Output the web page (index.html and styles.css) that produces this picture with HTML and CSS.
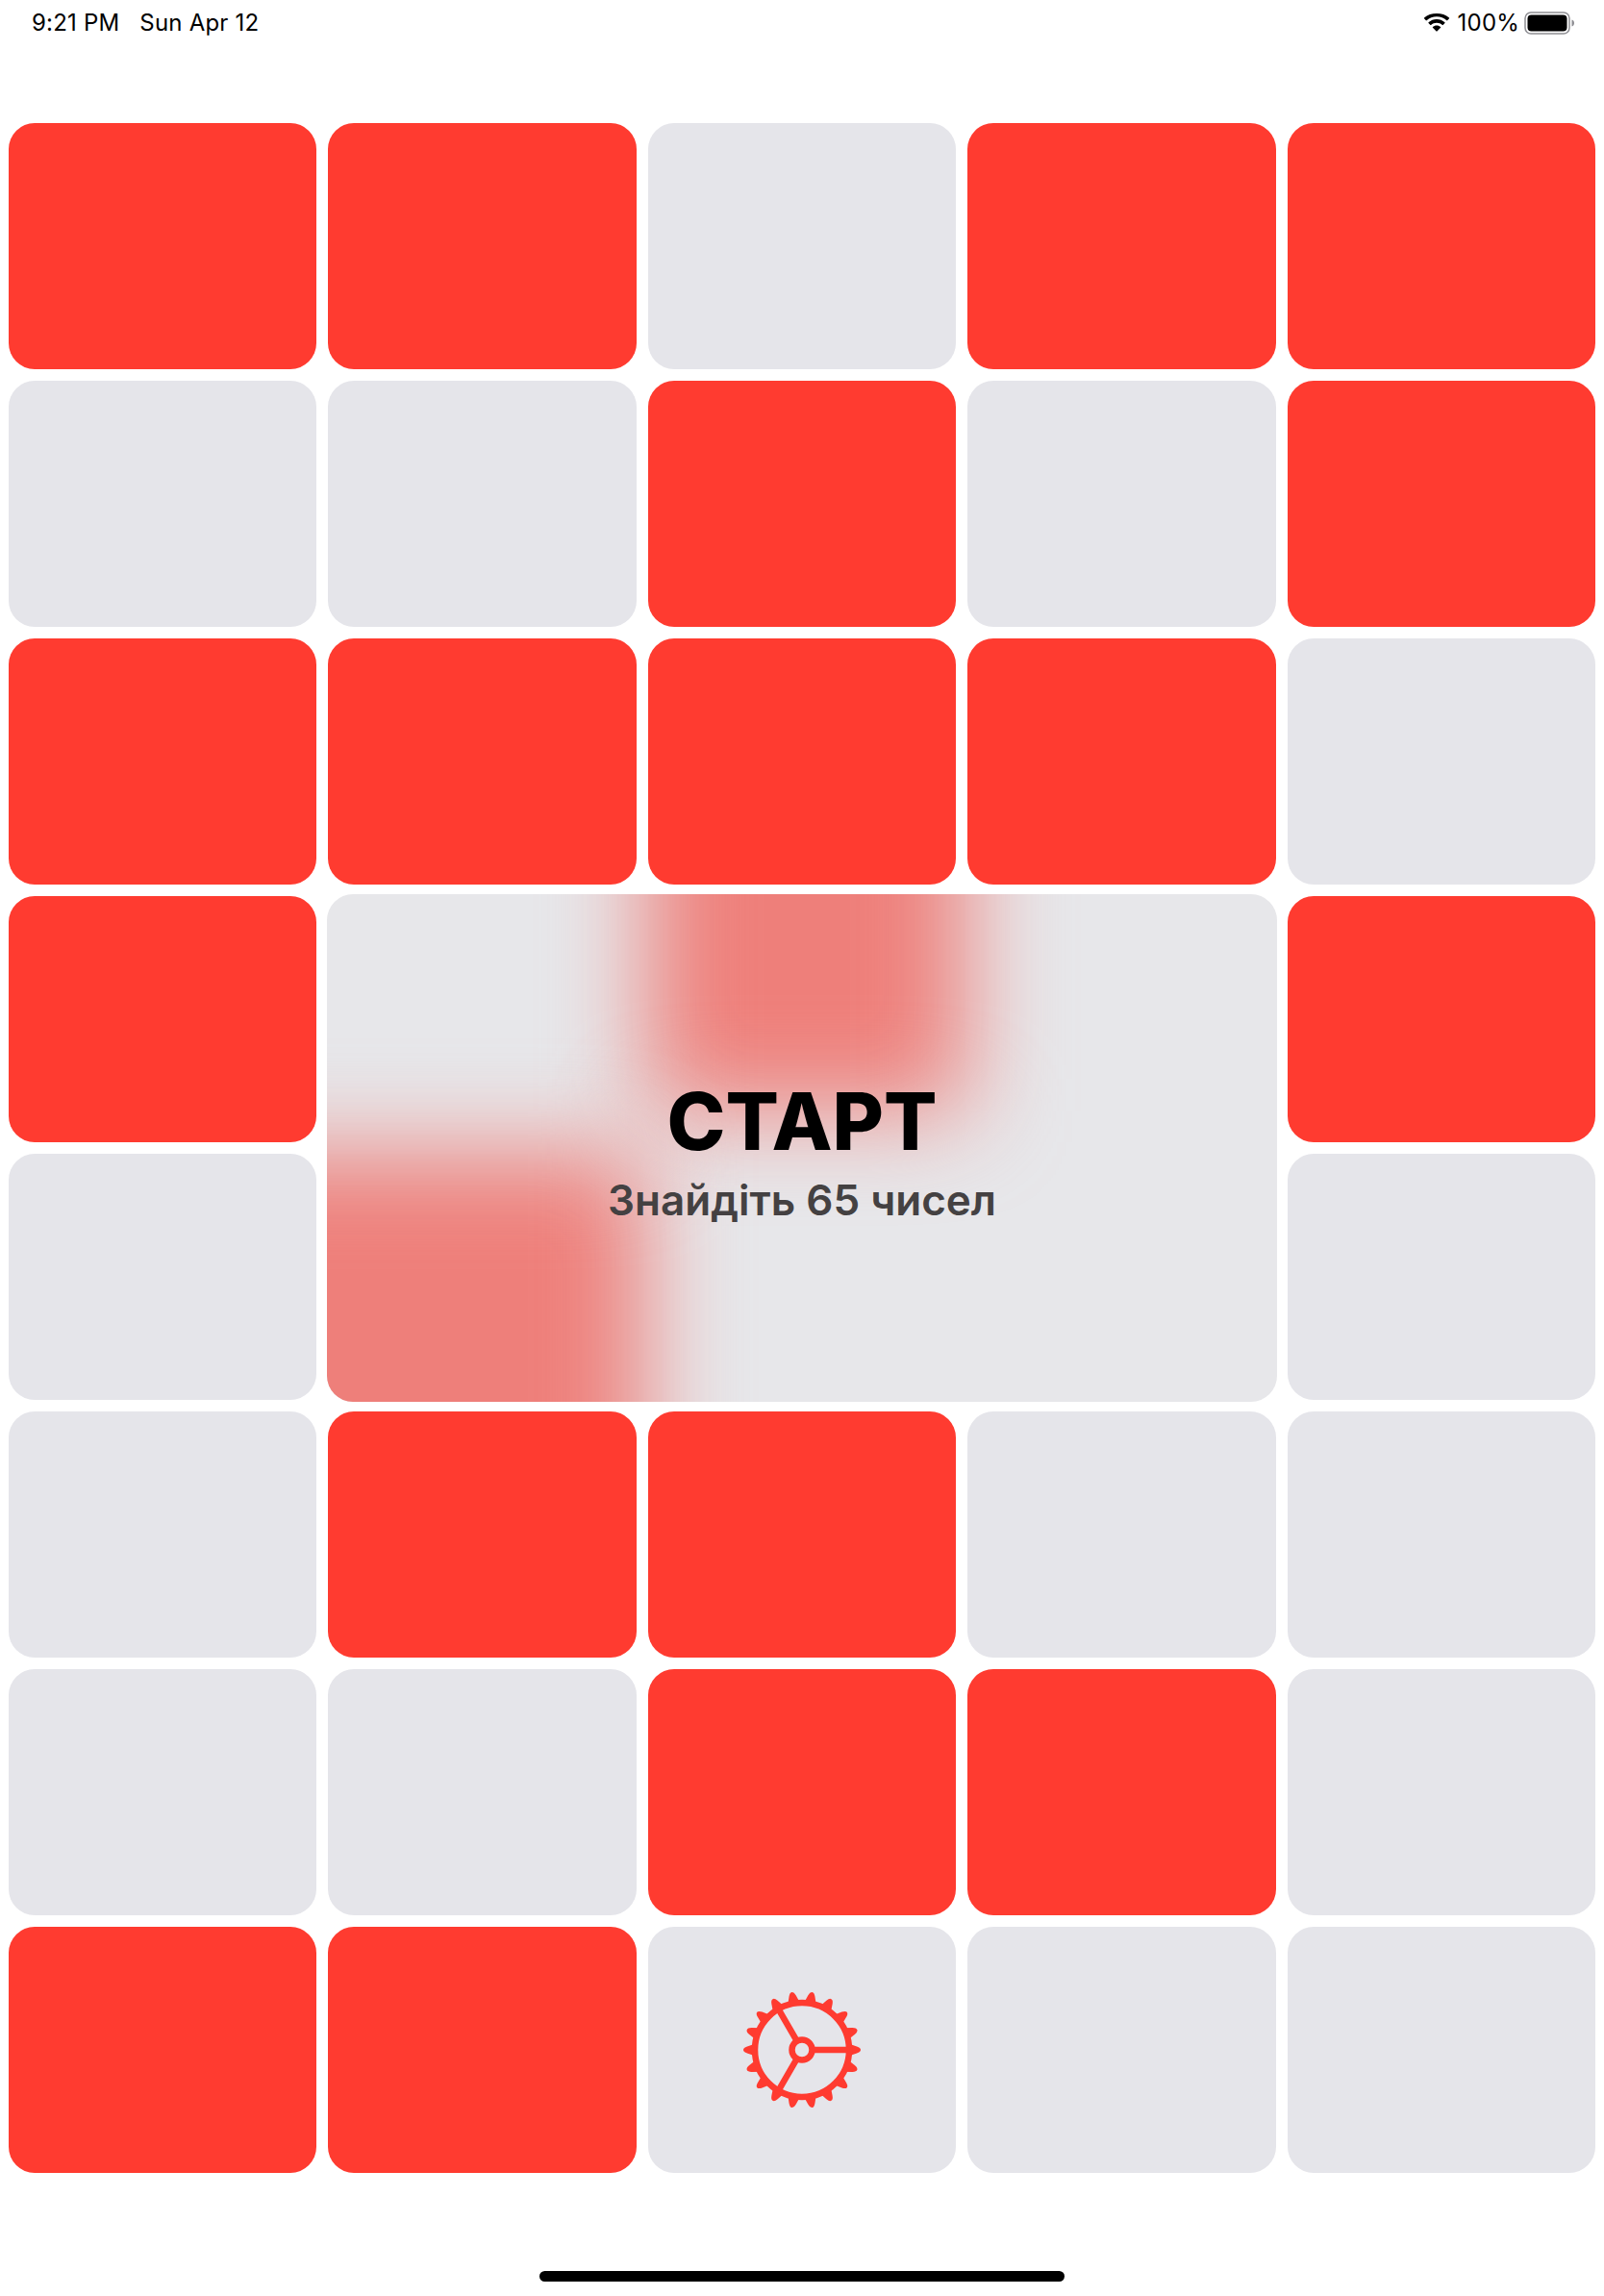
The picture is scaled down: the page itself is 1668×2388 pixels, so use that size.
FILE: index.html
```html
<!DOCTYPE html>
<html lang="en">
<head>
    <meta charset="UTF-8">
    <meta name="viewport" content="width=device-width, initial-scale=1.0">
    <title>Знайдіть 65 чисел</title>
    <link rel="stylesheet" href="styles.css">
</head>
<body>
    <div class="status-bar">
        <div class="status-left">
            <span>9:21 PM</span>
            <span>Sun Apr 12</span>
        </div>
        <div class="status-right">
            <svg class="wifi" width="28" height="20" viewBox="0 0 28 20">
                <path d="M14 3.200c4 0 7.600 1.500 10.400 4.100.2.2.5.2.7 0l1.900-2c.2-.2.2-.5 0-.7C23.600 1.400 19 0 14 0S4.400 1.400 1 4.600c-.2.2-.2.5 0 .7l1.900 2c.2.2.5.2.7 0C6.400 4.700 10 3.200 14 3.200z"/>
                <path d="M14 9.700c2.200 0 4.300.8 5.900 2.300.2.2.5.2.7 0l1.900-2c.2-.2.2-.5 0-.7C20.200 7.200 17.200 6 14 6s-6.200 1.200-8.500 3.300c-.2.2-.2.5 0 .7l1.900 2c.2.2.5.2.7 0 1.600-1.500 3.700-2.300 5.900-2.300z"/>
                <path d="M14 12.400c-1.600 0-3 .6-4.100 1.600-.2.2-.2.5 0 .7l3.700 3.900c.2.2.6.2.8 0l3.700-3.900c.2-.2.2-.5 0-.7-1.100-1-2.500-1.600-4.100-1.600z"/>
            </svg>
            <span>100%</span>
            <svg class="battery" width="53" height="24" viewBox="0 0 53 24">
                <rect x="1" y="1" width="46" height="22" rx="6" fill="none" stroke="#8e8e93" stroke-width="1.500"/>
                <rect x="3.500" y="3.500" width="41" height="17" rx="4"/>
                <path d="M49.500 8.500c1.600.4 2.500 1.800 2.500 3.500s-.9 3.100-2.500 3.500z" fill="#8e8e93"/>
            </svg>
        </div>
    </div>

    <div class="board-wrap">
        <div class="board">
            <div class="cell red"></div>
            <div class="cell red"></div>
            <div class="cell"></div>
            <div class="cell red"></div>
            <div class="cell red"></div>

            <div class="cell"></div>
            <div class="cell"></div>
            <div class="cell red"></div>
            <div class="cell"></div>
            <div class="cell red"></div>

            <div class="cell red"></div>
            <div class="cell red"></div>
            <div class="cell red"></div>
            <div class="cell red"></div>
            <div class="cell"></div>

            <div class="cell red"></div>
            <div class="cell"></div>
            <div class="cell red"></div>
            <div class="cell"></div>
            <div class="cell red"></div>

            <div class="cell"></div>
            <div class="cell red"></div>
            <div class="cell"></div>
            <div class="cell"></div>
            <div class="cell"></div>

            <div class="cell"></div>
            <div class="cell red"></div>
            <div class="cell red"></div>
            <div class="cell"></div>
            <div class="cell"></div>

            <div class="cell"></div>
            <div class="cell"></div>
            <div class="cell red"></div>
            <div class="cell red"></div>
            <div class="cell"></div>

            <div class="cell red"></div>
            <div class="cell red"></div>
            <div class="cell settings">
                <svg width="124" height="124" viewBox="-62 -62 124 124">
                    <defs>
                        <path id="tooth" d="M47 -7 L57 -3.600 Q61 -2.200 61 0 Q61 2.200 57 3.600 L47 7 z"/>
                    </defs>
                    <g class="gear-teeth">
                        <use href="#tooth"/>
                        <use href="#tooth" transform="rotate(20)"/>
                        <use href="#tooth" transform="rotate(40)"/>
                        <use href="#tooth" transform="rotate(60)"/>
                        <use href="#tooth" transform="rotate(80)"/>
                        <use href="#tooth" transform="rotate(100)"/>
                        <use href="#tooth" transform="rotate(120)"/>
                        <use href="#tooth" transform="rotate(140)"/>
                        <use href="#tooth" transform="rotate(160)"/>
                        <use href="#tooth" transform="rotate(180)"/>
                        <use href="#tooth" transform="rotate(200)"/>
                        <use href="#tooth" transform="rotate(220)"/>
                        <use href="#tooth" transform="rotate(240)"/>
                        <use href="#tooth" transform="rotate(260)"/>
                        <use href="#tooth" transform="rotate(280)"/>
                        <use href="#tooth" transform="rotate(300)"/>
                        <use href="#tooth" transform="rotate(320)"/>
                        <use href="#tooth" transform="rotate(340)"/>
                    </g>
                    <g class="gear-lines">
                        <circle r="49"/>
                        <circle r="10.500"/>
                        <path d="M10.500 0 H49 M-5.250 -9.100 L-24.500 -42.400 M-5.250 9.100 L-24.500 42.400"/>
                    </g>
                </svg>
            </div>
            <div class="cell"></div>
            <div class="cell"></div>
        </div>

        <!-- second grid with the same tracks, sits on top of the board -->
        <div class="board board-top">
            <div class="start-panel">
                <div class="blob blob-top"></div>
                <div class="blob blob-left"></div>
                <div class="start-title">СТАРТ</div>
                <div class="start-sub">Знайдіть 65 чисел</div>
            </div>
        </div>
    </div>

    <div class="home-bar"></div>
</body>
</html>
```

FILE: styles.css
```css
* {
    box-sizing: border-box;
}
body {
    margin: 0;
    width: 1668px;
    height: 2388px;
    display: flex;
    flex-direction: column;
    overflow: hidden;
    font-family: Inter, "Noto Sans", sans-serif;
    background: #fff;
    color: #000;
}
.status-bar {
    height: 128px;
    padding: 10px 30px 0 33px;
    display: flex;
    justify-content: space-between;
    align-items: flex-start;
    font-size: 24px;
    letter-spacing: 0.2px;
    line-height: 28px;
    flex-shrink: 0;
}
.status-left {
    display: flex;
    gap: 21px;
}
.status-right {
    display: flex;
    align-items: center;
    gap: 5px;
}
.wifi {
    margin-right: 3px;
}
.board-wrap {
    display: grid;
    margin: 0 9px;
}
.board {
    grid-area: 1 / 1;
    display: grid;
    grid-template-columns: repeat(5, 1fr);
    grid-template-rows: repeat(8, 256px);
    gap: 12px;
}
.cell {
    background: #e5e5ea;
    border-radius: 27px;
}
.cell.red {
    background: #ff3b30;
}
.settings {
    display: flex;
    align-items: center;
    justify-content: center;
}
.gear-teeth {
    fill: #ff3b30;
}
.gear-lines {
    fill: none;
    stroke: #ff3b30;
    stroke-width: 6.500;
}
.start-panel {
    grid-column: 2 / 5;
    grid-row: 4 / 6;
    margin: -2px -1px;
    padding-top: 3px;
    border-radius: 27px;
    background: #e7e7ea;
    overflow: hidden;
    position: relative;
    display: flex;
    flex-direction: column;
    align-items: center;
    justify-content: center;
}
/* blurred red cells showing through the panel */
.blob {
    position: absolute;
    background: #ee7f7a;
    filter: blur(50px);
}
.blob-top {
    left: 334px;
    top: -160px;
    width: 330px;
    height: 385px;
}
.blob-left {
    left: -160px;
    top: 270px;
    width: 489px;
    height: 440px;
}
.start-title {
    position: relative;
    font-size: 82px;
    line-height: 100px;
    font-weight: 800;
}
.start-sub {
    position: relative;
    font-size: 44px;
    line-height: 54px;
    font-weight: 600;
    color: #444142;
    margin-top: 4px;
}
.home-bar {
    width: 546px;
    height: 11px;
    margin: 102px auto 0;
    border-radius: 6px;
    background: #000;
}
```
